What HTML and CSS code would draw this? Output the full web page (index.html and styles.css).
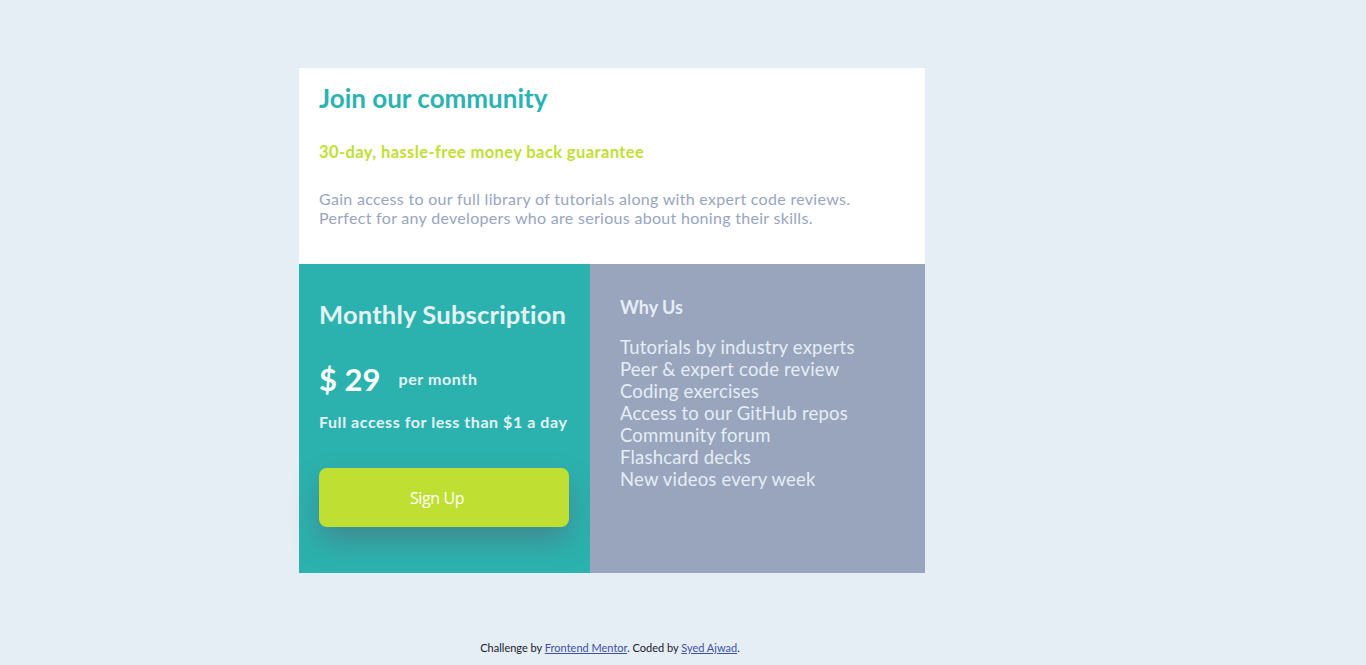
FILE: index.html
```html
<!DOCTYPE html>
<html lang="en">
<head>
<meta charset="utf-8">
<title>Single price grid</title>
<link rel="stylesheet" href="styles.css">
</head>
<body>
<div class="page">
  <main class="card">
    <section class="top">
      <h1 class="title">Join our community</h1>
      <h2 class="guarantee">30-day, hassle-free money back guarantee</h2>
      <p class="intro">Gain access to our full library of tutorials along with expert code reviews.<br>Perfect for any developers who are serious about honing their skills.</p>
    </section>
    <div class="bottom">
      <section class="sub">
        <h2 class="sub-title">Monthly Subscription</h2>
        <div class="price"><span class="amount">$ 29</span><span class="per">per month</span></div>
        <p class="access">Full access for less than $1 a day</p>
        <button class="signup">Sign Up</button>
      </section>
      <section class="why">
        <h2 class="why-title">Why Us</h2>
        <ul class="why-list">
          <li>Tutorials by industry experts</li>
          <li>Peer &amp; expert code review</li>
          <li>Coding exercises</li>
          <li>Access to our GitHub repos</li>
          <li>Community forum</li>
          <li>Flashcard decks</li>
          <li>New videos every week</li>
        </ul>
      </section>
    </div>
  </main>
  <footer class="attribution">Challenge by <a href="#">Frontend Mentor</a>. Coded by <a href="#">Syed Ajwad</a>.</footer>
</div>
</body>
</html>
```
FILE: styles.css
```css
* { box-sizing: border-box; }
html, body { margin: 0; padding: 0; }
body {
  background: #e5edf5;
  font-family: "Lato", "Noto Sans", sans-serif;
  height: 665px;
  overflow: hidden;
}
.page {
  width: 626px;
  margin-left: 299px;
  padding-top: 68px;
}
.card {
  display: flex;
  flex-direction: column;
}
.top {
  background: #ffffff;
  height: 196px;
  padding: 15px 20px 0;
}
.title {
  margin: 0;
  color: #2bb3b1;
  font-size: 26px;
  font-weight: 700;
  line-height: 30px;
}
.guarantee {
  margin: 29px 0 0;
  color: #bfdf32;
  font-size: 16.5px;
  font-weight: 700;
  line-height: 20px;
  letter-spacing: 0.4px;
}
.intro {
  margin: 27px 0 0;
  color: #98a5bf;
  font-size: 16px;
  line-height: 19px;
  letter-spacing: 0.3px;
}
.bottom {
  display: flex;
  height: 309px;
}
.sub {
  width: 291px;
  background: #2bb2ae;
  padding: 36px 20px 0;
}
.sub-title {
  margin: 0;
  color: #e5f2f4;
  font-size: 25.5px;
  font-weight: 700;
  line-height: 28px;
  letter-spacing: 0.2px;
}
.price {
  display: flex;
  align-items: baseline;
  margin-top: 33px;
  gap: 18px;
}
.amount {
  color: #ffffff;
  font-size: 31px;
  font-weight: 700;
  line-height: 36px;
}
.per {
  color: #e5f2f4;
  font-size: 16px;
  font-weight: 700;
  letter-spacing: 0.6px;
  position: relative;
  top: -6px;
}
.access {
  margin: 15px 0 0;
  color: #e5f2f4;
  font-size: 16px;
  font-weight: 700;
  line-height: 20px;
  letter-spacing: 0.55px;
}
.signup {
  display: block;
  margin-top: 36px;
  width: 250px;
  height: 59px;
  padding: 0 14px 0 0;
  border: none;
  border-radius: 8px;
  background: #bfdf32;
  color: #ffffff;
  font-family: "Open Sans", sans-serif;
  font-size: 16px;
  letter-spacing: -0.4px;
  box-shadow: 0 14px 28px rgba(90, 90, 110, 0.45);
}
.why {
  flex: 1;
  background: #98a5bd;
  padding: 32px 30px 0;
  color: #e5edf5;
}
.why-title {
  margin: 0;
  font-size: 18px;
  font-weight: 700;
  line-height: 22px;
}
.why-list {
  list-style: none;
  margin: 18px 0 0;
  padding: 0;
  font-size: 18.5px;
  line-height: 22px;
  letter-spacing: 0.2px;
}
.attribution {
  margin-top: 68px;
  text-align: center;
  font-size: 11px;
  color: #1a1a2e;
  padding-right: 4px;
}
.attribution a { color: #3e52a3; }
```
